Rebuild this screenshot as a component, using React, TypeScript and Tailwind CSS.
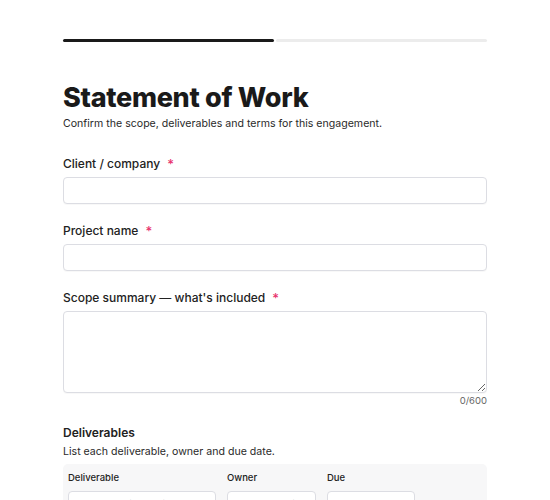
import React from "react";

function Req() {
  return <span className="ml-[7px] text-[13px] leading-none text-[#e8336e]">*</span>;
}

function Field({ label, children }: { label: string; children: React.ReactNode }) {
  return (
    <div className="flex flex-col">
      <label className="flex h-[16px] items-center text-[12px] font-medium leading-[16px] text-[#222]">
        {label}
        <Req />
      </label>
      <div className="mt-[5px]">{children}</div>
    </div>
  );
}

const inputCls =
  "block h-[27px] w-full rounded-[4px] border border-[#dcdde3] bg-white shadow-[0_1px_1px_rgba(0,0,0,0.03)]";

export default function App() {
  return (
    <div
      className="min-h-[500px] bg-white text-[#1c1c1c]"
      style={{ fontFamily: "Inter, 'Noto Sans', sans-serif" }}
    >
      <div className="mx-auto w-[424px] pt-[39px]">
        <div className="flex gap-[2px]">
          <div className="h-[3px] flex-1 rounded-full bg-[#1a1a1a]" />
          <div className="h-[3px] flex-1 rounded-full bg-[#ececec]" />
        </div>

        <h1 className="mt-[40px] text-[27px] font-extrabold leading-[32px] tracking-[-0.3px] text-[#1a1a1a]">
          Statement of Work
        </h1>
        <p className="mt-[3px] text-[10.6px] leading-[14px] text-[#2a2a2a]">
          Confirm the scope, deliverables and terms for this engagement.
        </p>

        <div className="mt-[25px] flex flex-col gap-[19px]">
          <Field label="Client / company">
            <input className={inputCls} />
          </Field>
          <Field label="Project name">
            <input className={inputCls} />
          </Field>
          <div>
            <Field label="Scope summary — what's included">
              <textarea className={`${inputCls} h-[82px] resize-y`} />
            </Field>
            <div className="mt-[2px] text-right text-[9.5px] leading-[12px] text-[#666]">0/600</div>
          </div>
        </div>

        <h2 className="mt-[18px] text-[12px] font-semibold leading-[16px] text-[#222]">Deliverables</h2>
        <p className="mt-[4px] text-[10.6px] leading-[14px] text-[#2a2a2a]">
          List each deliverable, owner and due date.
        </p>

        <div className="mt-[5px] rounded-[5px] bg-[#f7f7f8] px-[5px] pt-[8px] pb-[10px]">
          <div className="grid grid-cols-[148px_89px_88px] gap-x-[11px] text-[9.5px] font-medium leading-[12px] text-[#222]">
            <div>Deliverable</div>
            <div>Owner</div>
            <div>Due</div>
          </div>
          <div className="mt-[7px] grid grid-cols-[148px_89px_88px] gap-x-[11px]">
            <input
              className="h-[27px] rounded-[4px] border border-[#dcdde3] bg-white pl-[31px] text-[10.5px] placeholder:text-[#9a9a9a]"
              placeholder="Describe deliverable"
            />
            <input
              className="h-[27px] rounded-[4px] border border-[#dcdde3] bg-white pl-[9px] text-[10.5px] placeholder:text-[#9a9a9a]"
              placeholder="Who owns it"
            />
            <input
              className="h-[27px] rounded-[4px] border border-[#dcdde3] bg-white pl-[6px] text-[10.5px] placeholder:text-[#9a9a9a]"
              placeholder="Mm/Dd/yyyy"
            />
          </div>
        </div>
      </div>
    </div>
  );
}
